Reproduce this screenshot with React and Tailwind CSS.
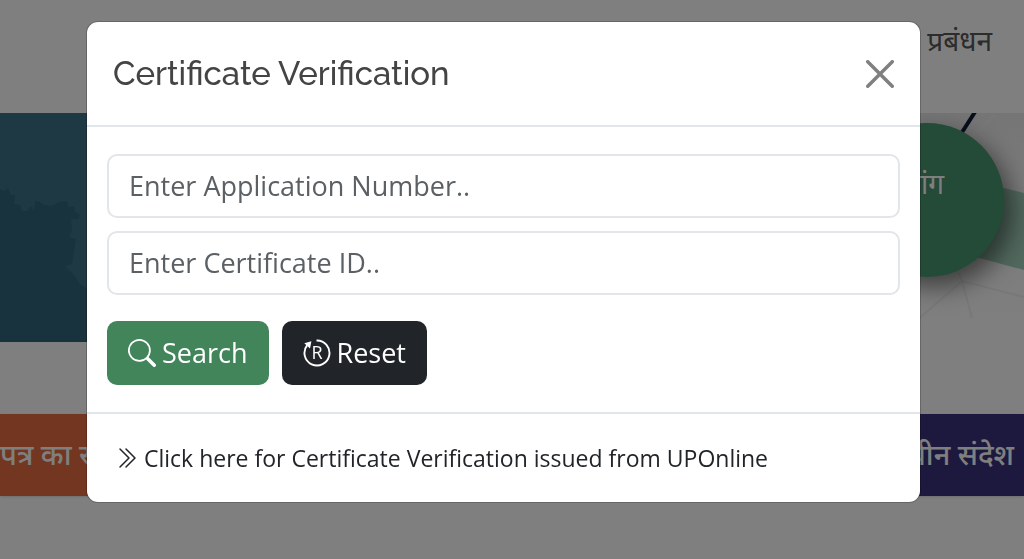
import React, { useState } from "react";
import { BsSearch, BsChevronDoubleRight } from "react-icons/bs";

function CloseIcon() {
  return (
    <svg className="h-7 w-7" viewBox="0 0 16 16" fill="currentColor" aria-hidden="true">
      <path d="M.293.293a1 1 0 0 1 1.414 0L8 6.586 14.293.293a1 1 0 1 1 1.414 1.414L9.414 8l6.293 6.293a1 1 0 0 1-1.414 1.414L8 9.414l-6.293 6.293a1 1 0 0 1-1.414-1.414L6.586 8 .293 1.707a1 1 0 0 1 0-1.414z" />
    </svg>
  );
}

function ResetIcon() {
  return (
    <svg className="h-7 w-7" viewBox="0 0 28 28" fill="none" stroke="currentColor" aria-hidden="true">
      <path d="M13.5 1.5A12.5 12.5 0 1 1 4.2 6.2" strokeWidth="1.9" />
      <path d="M1.3 4.2L8.4 2.2L7 9.4Z" fill="currentColor" stroke="none" />
      <text
        x="14"
        y="20"
        textAnchor="middle"
        fill="currentColor"
        stroke="none"
        className="font-['Open_Sans',sans-serif] text-[18px] font-medium"
      >
        R
      </text>
    </svg>
  );
}

function Page() {
  return (
    <div className="font-['Noto_Sans','Noto_Sans_Devanagari',sans-serif] text-[28px] leading-10">
      <header className="flex h-[113px] items-start justify-end pt-5 pr-8">
        <a href="#management" className="text-[#585858]">प्रबंधन</a>
      </header>

      {/* Banner */}
      <section className="flex h-[229px] overflow-hidden">
        <div className="flex-1 bg-[#3c7088]">
          <svg className="h-full w-[120px]" viewBox="0 0 120 229" fill="#30647c" aria-hidden="true">
            <path d="M0 76L4 78L8 75L11 82L15 82L14 91L20 92L22 98L27 98L31 93L34 98L35 88L40 89L44 92L51 93L60 89L67 88L68 94L74 93L75 99L80 102L78 106L71 106L72 117L69 124L76 126L74 138L72 151L65 153L70 158L76 165L80 171L86 175L120 175V229H0Z" />
          </svg>
        </div>
        <div className="relative w-60 bg-[#f8f8f8]">
          <svg className="h-full w-full" viewBox="0 0 240 229" fill="none" aria-hidden="true">
            <defs>
              <linearGradient id="sky" x1="0" y1="0" x2="0" y2="1">
                <stop offset="0" stopColor="#ebebeb" />
                <stop offset="0.3" stopColor="#f6f6f6" />
                <stop offset="1" stopColor="#ffffff" />
              </linearGradient>
            </defs>
            <rect width="240" height="229" fill="url(#sky)" />
            <path d="M140 55L240 80V157L140 130Z" fill="#a4d2be" />
            <path d="M191 -1L175 24" stroke="#121c3c" strokeWidth="4" />
            <path d="M212 2L180 30M132 208L178 168L240 184M178 168L166 140M178 168L188 205" stroke="#f0f0f0" strokeWidth="2" />
          </svg>
          <div className="absolute top-2.5 right-5 flex h-[154px] w-[154px] items-start justify-end rounded-full bg-[#489470] pt-10 pr-15 text-white shadow-[8px_10px_24px_rgba(0,0,0,0.5)]">
            मांग
          </div>
        </div>
      </section>

      {/* Quick links */}
      <div className="mt-[72px] grid grid-cols-2 gap-4 text-[29px] text-white">
        <a href="#certificates" className="h-[82px] bg-[#e66c40] pt-5 font-medium shadow-sm">पत्र का र</a>
        <a href="#messages" className="h-[82px] bg-[#38307c] pt-5 pr-2.5 text-right font-medium shadow-sm">नवीन संदेश</a>
      </div>
    </div>
  );
}

function App() {
  const [applicationNo, setApplicationNo] = useState("");
  const [certificateId, setCertificateId] = useState("");

  const handleReset = () => {
    setApplicationNo("");
    setCertificateId("");
  };

  const inputClass =
    "h-16 w-full rounded-[10px] border-2 border-[#e2e5e9] px-5 pb-0.5 text-[27px] text-[#212529] placeholder:text-[#5b6065] outline-none";

  return (
    <div className="min-h-screen overflow-hidden bg-white">
      <Page />

      <div className="fixed inset-0 bg-black/50 pt-[21px] pr-[17px]">
        <div
          role="dialog"
          aria-labelledby="modal-title"
          className="mx-auto w-full max-w-[835px] rounded-xl border border-black/20 bg-white bg-clip-padding font-['Open_Sans','Noto_Sans',sans-serif] text-[#212529]"
        >
          <div className="flex h-[105px] items-center justify-between border-b-2 border-[#e2e5e9] px-[26px]">
            <h5 id="modal-title" className="font-['Raleway','Lato',sans-serif] text-[33px] font-medium text-[#444444]">
              Certificate Verification
            </h5>
            <button type="button" aria-label="Close" className="text-[#808080]">
              <CloseIcon />
            </button>
          </div>

          <form className="px-5 py-[27px]" onSubmit={(e) => e.preventDefault()}>
            <div className="flex flex-col gap-[13px]">
              <input
                type="text"
                aria-label="Application Number"
                placeholder="Enter Application Number.."
                className={inputClass}
                value={applicationNo}
                onChange={(e) => setApplicationNo(e.target.value)}
              />
              <input
                type="text"
                aria-label="Certificate ID"
                placeholder="Enter Certificate ID.."
                className={inputClass}
                value={certificateId}
                onChange={(e) => setCertificateId(e.target.value)}
              />
            </div>
            <div className="mt-[26px] flex gap-[13px] text-[27px] text-white">
              <button type="submit" className="flex h-16 items-center gap-1.5 rounded-[10px] bg-[#42855b] px-[21px] font-medium">
                <BsSearch className="h-7 w-7" />
                Search
              </button>
              <button type="button" className="flex h-16 items-center gap-1.5 rounded-[10px] bg-[#212529] px-[21px] font-medium" onClick={handleReset}>
                <ResetIcon />
                Reset
              </button>
            </div>
          </form>

          <div className="flex h-[90px] items-center border-t-2 border-[#e2e5e9] px-[27px]">
            <a href="#uponline" className="flex items-center gap-1.5 text-[23px] font-medium">
              <BsChevronDoubleRight className="h-6 w-6" />
              Click here for Certificate Verification issued from UPOnline
            </a>
          </div>
        </div>
      </div>
    </div>
  );
}

export default App;
